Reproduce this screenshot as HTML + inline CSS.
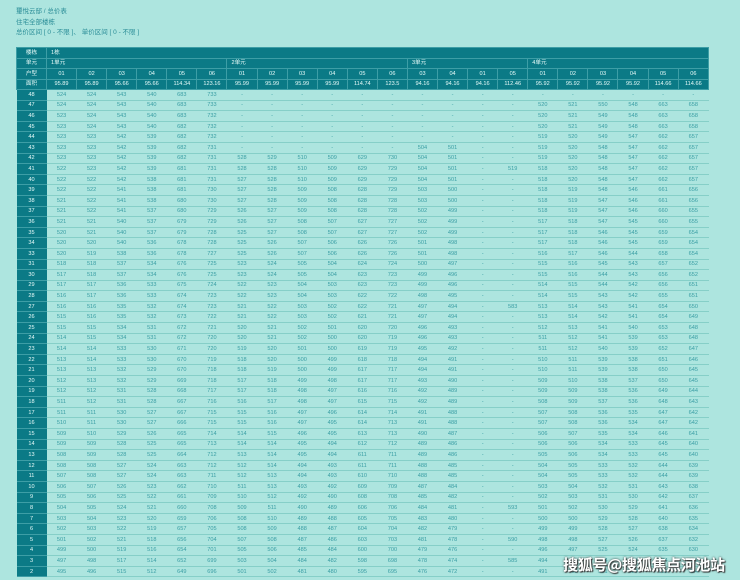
<!DOCTYPE html>
<html><head><meta charset="utf-8">
<style>
html,body{margin:0;padding:0;background:#ade5df;width:740px;height:580px;overflow:hidden;font-family:"Liberation Sans","Noto Sans CJK SC",sans-serif;}
.t{position:absolute;left:16px;font-size:6.5px;color:#2a8d97;line-height:8px;}
table{position:absolute;left:16px;top:47px;border-collapse:collapse;table-layout:fixed;width:692px;}
td{padding:0;font-size:5.6px;line-height:6px;text-align:center;white-space:nowrap;overflow:hidden;box-sizing:border-box;}
thead tr{height:10.5px;}
thead td{background:#0b7a86;color:#e8fbf9;border:1px solid #3d9ea6;}
thead td.l{text-align:left;padding-left:4px;}
tbody tr{height:10.6px;}
tbody td{color:#3a9ea4;border-bottom:1px solid #86cfc8;}
tbody td:first-child,thead td:first-child{background:#0b7a86;color:#e8fbf9;border-bottom:1px solid #3d9ea6;}
.wm{position:absolute;left:563px;top:554px;font-size:15px;font-weight:bold;color:#fff;text-shadow:0 0 2px #333,1px 1px 1px #333;font-family:"Noto Sans CJK SC",sans-serif;letter-spacing:-0.3px;}
</style></head><body>
<div class="t" style="top:8px">璽悅云邸 / 总价表</div>
<div class="t" style="top:19px">住宅全部楼栋</div>
<div class="t" style="top:29px">总价区间 [ 0 - 不限 ]、 单价区间 [ 0 - 不限 ]</div>
<table>
<colgroup><col style="width:30px"><col span="22" style="width:30.09px"></colgroup>
<thead>
<tr><td>楼栋</td><td class="l" colspan="22">1栋</td></tr>
<tr><td>单元</td><td class="l" colspan="6">1单元</td><td class="l" colspan="6">2单元</td><td class="l" colspan="4">3单元</td><td class="l" colspan="6">4单元</td></tr>
<tr><td>户型</td><td>01</td><td>02</td><td>03</td><td>04</td><td>05</td><td>06</td><td>01</td><td>02</td><td>03</td><td>04</td><td>05</td><td>06</td><td>03</td><td>04</td><td>01</td><td>05</td><td>01</td><td>02</td><td>03</td><td>04</td><td>05</td><td>06</td></tr>
<tr><td>面积</td><td>95.89</td><td>95.89</td><td>95.66</td><td>95.66</td><td>114.34</td><td>123.16</td><td>95.99</td><td>95.99</td><td>95.99</td><td>95.99</td><td>114.74</td><td>123.5</td><td>94.16</td><td>94.16</td><td>94.16</td><td>112.46</td><td>95.92</td><td>95.92</td><td>95.92</td><td>95.92</td><td>114.66</td><td>114.66</td></tr>
</thead>
<tbody>
<tr><td>48</td><td>524</td><td>524</td><td>543</td><td>540</td><td>683</td><td>733</td><td>-</td><td>-</td><td>-</td><td>-</td><td>-</td><td>-</td><td>-</td><td>-</td><td>-</td><td>-</td><td>-</td><td>-</td><td>-</td><td>-</td><td>-</td><td>-</td></tr>
<tr><td>47</td><td>524</td><td>524</td><td>543</td><td>540</td><td>683</td><td>733</td><td>-</td><td>-</td><td>-</td><td>-</td><td>-</td><td>-</td><td>-</td><td>-</td><td>-</td><td>-</td><td>520</td><td>521</td><td>550</td><td>548</td><td>663</td><td>658</td></tr>
<tr><td>46</td><td>523</td><td>524</td><td>543</td><td>540</td><td>683</td><td>732</td><td>-</td><td>-</td><td>-</td><td>-</td><td>-</td><td>-</td><td>-</td><td>-</td><td>-</td><td>-</td><td>520</td><td>521</td><td>549</td><td>548</td><td>663</td><td>658</td></tr>
<tr><td>45</td><td>523</td><td>524</td><td>543</td><td>540</td><td>682</td><td>732</td><td>-</td><td>-</td><td>-</td><td>-</td><td>-</td><td>-</td><td>-</td><td>-</td><td>-</td><td>-</td><td>520</td><td>521</td><td>549</td><td>548</td><td>663</td><td>658</td></tr>
<tr><td>44</td><td>523</td><td>523</td><td>542</td><td>539</td><td>682</td><td>732</td><td>-</td><td>-</td><td>-</td><td>-</td><td>-</td><td>-</td><td>-</td><td>-</td><td>-</td><td>-</td><td>519</td><td>520</td><td>549</td><td>547</td><td>662</td><td>657</td></tr>
<tr><td>43</td><td>523</td><td>523</td><td>542</td><td>539</td><td>682</td><td>731</td><td>-</td><td>-</td><td>-</td><td>-</td><td>-</td><td>-</td><td>504</td><td>501</td><td>-</td><td>-</td><td>519</td><td>520</td><td>548</td><td>547</td><td>662</td><td>657</td></tr>
<tr><td>42</td><td>523</td><td>523</td><td>542</td><td>539</td><td>682</td><td>731</td><td>528</td><td>529</td><td>510</td><td>509</td><td>629</td><td>730</td><td>504</td><td>501</td><td>-</td><td>-</td><td>519</td><td>520</td><td>548</td><td>547</td><td>662</td><td>657</td></tr>
<tr><td>41</td><td>522</td><td>523</td><td>542</td><td>539</td><td>681</td><td>731</td><td>528</td><td>528</td><td>510</td><td>509</td><td>629</td><td>729</td><td>504</td><td>501</td><td>-</td><td>519</td><td>518</td><td>520</td><td>548</td><td>547</td><td>662</td><td>657</td></tr>
<tr><td>40</td><td>522</td><td>522</td><td>542</td><td>538</td><td>681</td><td>731</td><td>527</td><td>528</td><td>510</td><td>509</td><td>629</td><td>729</td><td>504</td><td>501</td><td>-</td><td>-</td><td>518</td><td>520</td><td>548</td><td>547</td><td>662</td><td>657</td></tr>
<tr><td>39</td><td>522</td><td>522</td><td>541</td><td>538</td><td>681</td><td>730</td><td>527</td><td>528</td><td>509</td><td>508</td><td>628</td><td>729</td><td>503</td><td>500</td><td>-</td><td>-</td><td>518</td><td>519</td><td>548</td><td>546</td><td>661</td><td>656</td></tr>
<tr><td>38</td><td>521</td><td>522</td><td>541</td><td>538</td><td>680</td><td>730</td><td>527</td><td>528</td><td>509</td><td>508</td><td>628</td><td>728</td><td>503</td><td>500</td><td>-</td><td>-</td><td>518</td><td>519</td><td>547</td><td>546</td><td>661</td><td>656</td></tr>
<tr><td>37</td><td>521</td><td>522</td><td>541</td><td>537</td><td>680</td><td>729</td><td>526</td><td>527</td><td>509</td><td>508</td><td>628</td><td>728</td><td>502</td><td>499</td><td>-</td><td>-</td><td>518</td><td>519</td><td>547</td><td>546</td><td>660</td><td>655</td></tr>
<tr><td>36</td><td>521</td><td>521</td><td>540</td><td>537</td><td>679</td><td>729</td><td>526</td><td>527</td><td>508</td><td>507</td><td>627</td><td>727</td><td>502</td><td>499</td><td>-</td><td>-</td><td>517</td><td>518</td><td>547</td><td>545</td><td>660</td><td>655</td></tr>
<tr><td>35</td><td>520</td><td>521</td><td>540</td><td>537</td><td>679</td><td>728</td><td>525</td><td>527</td><td>508</td><td>507</td><td>627</td><td>727</td><td>502</td><td>499</td><td>-</td><td>-</td><td>517</td><td>518</td><td>546</td><td>545</td><td>659</td><td>654</td></tr>
<tr><td>34</td><td>520</td><td>520</td><td>540</td><td>536</td><td>678</td><td>728</td><td>525</td><td>526</td><td>507</td><td>506</td><td>626</td><td>726</td><td>501</td><td>498</td><td>-</td><td>-</td><td>517</td><td>518</td><td>546</td><td>545</td><td>659</td><td>654</td></tr>
<tr><td>33</td><td>520</td><td>519</td><td>538</td><td>536</td><td>678</td><td>727</td><td>525</td><td>526</td><td>507</td><td>506</td><td>626</td><td>726</td><td>501</td><td>498</td><td>-</td><td>-</td><td>516</td><td>517</td><td>546</td><td>544</td><td>658</td><td>654</td></tr>
<tr><td>31</td><td>518</td><td>518</td><td>537</td><td>534</td><td>676</td><td>725</td><td>523</td><td>524</td><td>505</td><td>504</td><td>624</td><td>724</td><td>500</td><td>497</td><td>-</td><td>-</td><td>515</td><td>516</td><td>545</td><td>543</td><td>657</td><td>652</td></tr>
<tr><td>30</td><td>517</td><td>518</td><td>537</td><td>534</td><td>676</td><td>725</td><td>523</td><td>524</td><td>505</td><td>504</td><td>623</td><td>723</td><td>499</td><td>496</td><td>-</td><td>-</td><td>515</td><td>516</td><td>544</td><td>543</td><td>656</td><td>652</td></tr>
<tr><td>29</td><td>517</td><td>517</td><td>536</td><td>533</td><td>675</td><td>724</td><td>522</td><td>523</td><td>504</td><td>503</td><td>623</td><td>723</td><td>499</td><td>496</td><td>-</td><td>-</td><td>514</td><td>515</td><td>544</td><td>542</td><td>656</td><td>651</td></tr>
<tr><td>28</td><td>516</td><td>517</td><td>536</td><td>533</td><td>674</td><td>723</td><td>522</td><td>523</td><td>504</td><td>503</td><td>622</td><td>722</td><td>498</td><td>495</td><td>-</td><td>-</td><td>514</td><td>515</td><td>543</td><td>542</td><td>655</td><td>651</td></tr>
<tr><td>27</td><td>516</td><td>516</td><td>535</td><td>532</td><td>674</td><td>723</td><td>521</td><td>522</td><td>503</td><td>502</td><td>622</td><td>721</td><td>497</td><td>494</td><td>-</td><td>583</td><td>513</td><td>514</td><td>543</td><td>541</td><td>654</td><td>650</td></tr>
<tr><td>26</td><td>515</td><td>516</td><td>535</td><td>532</td><td>673</td><td>722</td><td>521</td><td>522</td><td>503</td><td>502</td><td>621</td><td>721</td><td>497</td><td>494</td><td>-</td><td>-</td><td>513</td><td>514</td><td>542</td><td>541</td><td>654</td><td>649</td></tr>
<tr><td>25</td><td>515</td><td>515</td><td>534</td><td>531</td><td>672</td><td>721</td><td>520</td><td>521</td><td>502</td><td>501</td><td>620</td><td>720</td><td>496</td><td>493</td><td>-</td><td>-</td><td>512</td><td>513</td><td>541</td><td>540</td><td>653</td><td>648</td></tr>
<tr><td>24</td><td>514</td><td>515</td><td>534</td><td>531</td><td>672</td><td>720</td><td>520</td><td>521</td><td>502</td><td>500</td><td>620</td><td>719</td><td>496</td><td>493</td><td>-</td><td>-</td><td>511</td><td>512</td><td>541</td><td>539</td><td>653</td><td>648</td></tr>
<tr><td>23</td><td>514</td><td>514</td><td>533</td><td>530</td><td>671</td><td>720</td><td>519</td><td>520</td><td>501</td><td>500</td><td>619</td><td>719</td><td>495</td><td>492</td><td>-</td><td>-</td><td>511</td><td>512</td><td>540</td><td>539</td><td>652</td><td>647</td></tr>
<tr><td>22</td><td>513</td><td>514</td><td>533</td><td>530</td><td>670</td><td>719</td><td>518</td><td>520</td><td>500</td><td>499</td><td>618</td><td>718</td><td>494</td><td>491</td><td>-</td><td>-</td><td>510</td><td>511</td><td>539</td><td>538</td><td>651</td><td>646</td></tr>
<tr><td>21</td><td>513</td><td>513</td><td>532</td><td>529</td><td>670</td><td>718</td><td>518</td><td>519</td><td>500</td><td>499</td><td>617</td><td>717</td><td>494</td><td>491</td><td>-</td><td>-</td><td>510</td><td>511</td><td>539</td><td>538</td><td>650</td><td>645</td></tr>
<tr><td>20</td><td>512</td><td>513</td><td>532</td><td>529</td><td>669</td><td>718</td><td>517</td><td>518</td><td>499</td><td>498</td><td>617</td><td>717</td><td>493</td><td>490</td><td>-</td><td>-</td><td>509</td><td>510</td><td>538</td><td>537</td><td>650</td><td>645</td></tr>
<tr><td>19</td><td>512</td><td>512</td><td>531</td><td>528</td><td>668</td><td>717</td><td>517</td><td>518</td><td>498</td><td>497</td><td>616</td><td>716</td><td>492</td><td>489</td><td>-</td><td>-</td><td>509</td><td>509</td><td>538</td><td>536</td><td>649</td><td>644</td></tr>
<tr><td>18</td><td>511</td><td>512</td><td>531</td><td>528</td><td>667</td><td>716</td><td>516</td><td>517</td><td>498</td><td>497</td><td>615</td><td>715</td><td>492</td><td>489</td><td>-</td><td>-</td><td>508</td><td>509</td><td>537</td><td>536</td><td>648</td><td>643</td></tr>
<tr><td>17</td><td>511</td><td>511</td><td>530</td><td>527</td><td>667</td><td>715</td><td>515</td><td>516</td><td>497</td><td>496</td><td>614</td><td>714</td><td>491</td><td>488</td><td>-</td><td>-</td><td>507</td><td>508</td><td>536</td><td>535</td><td>647</td><td>642</td></tr>
<tr><td>16</td><td>510</td><td>511</td><td>530</td><td>527</td><td>666</td><td>715</td><td>515</td><td>516</td><td>497</td><td>495</td><td>614</td><td>713</td><td>491</td><td>488</td><td>-</td><td>-</td><td>507</td><td>508</td><td>536</td><td>534</td><td>647</td><td>642</td></tr>
<tr><td>15</td><td>509</td><td>510</td><td>529</td><td>526</td><td>665</td><td>714</td><td>514</td><td>515</td><td>496</td><td>495</td><td>613</td><td>713</td><td>490</td><td>487</td><td>-</td><td>-</td><td>506</td><td>507</td><td>535</td><td>534</td><td>646</td><td>641</td></tr>
<tr><td>14</td><td>509</td><td>509</td><td>528</td><td>525</td><td>665</td><td>713</td><td>514</td><td>514</td><td>495</td><td>494</td><td>612</td><td>712</td><td>489</td><td>486</td><td>-</td><td>-</td><td>506</td><td>506</td><td>534</td><td>533</td><td>645</td><td>640</td></tr>
<tr><td>13</td><td>508</td><td>509</td><td>528</td><td>525</td><td>664</td><td>712</td><td>513</td><td>514</td><td>495</td><td>494</td><td>611</td><td>711</td><td>489</td><td>486</td><td>-</td><td>-</td><td>505</td><td>506</td><td>534</td><td>533</td><td>645</td><td>640</td></tr>
<tr><td>12</td><td>508</td><td>508</td><td>527</td><td>524</td><td>663</td><td>712</td><td>512</td><td>514</td><td>494</td><td>493</td><td>611</td><td>711</td><td>488</td><td>485</td><td>-</td><td>-</td><td>504</td><td>505</td><td>533</td><td>532</td><td>644</td><td>639</td></tr>
<tr><td>11</td><td>507</td><td>508</td><td>527</td><td>524</td><td>663</td><td>711</td><td>512</td><td>513</td><td>494</td><td>493</td><td>610</td><td>710</td><td>488</td><td>485</td><td>-</td><td>-</td><td>504</td><td>505</td><td>533</td><td>532</td><td>644</td><td>639</td></tr>
<tr><td>10</td><td>506</td><td>507</td><td>526</td><td>523</td><td>662</td><td>710</td><td>511</td><td>513</td><td>493</td><td>492</td><td>609</td><td>709</td><td>487</td><td>484</td><td>-</td><td>-</td><td>503</td><td>504</td><td>532</td><td>531</td><td>643</td><td>638</td></tr>
<tr><td>9</td><td>505</td><td>506</td><td>525</td><td>522</td><td>661</td><td>709</td><td>510</td><td>512</td><td>492</td><td>490</td><td>608</td><td>708</td><td>485</td><td>482</td><td>-</td><td>-</td><td>502</td><td>503</td><td>531</td><td>530</td><td>642</td><td>637</td></tr>
<tr><td>8</td><td>504</td><td>505</td><td>524</td><td>521</td><td>660</td><td>708</td><td>509</td><td>511</td><td>490</td><td>489</td><td>606</td><td>706</td><td>484</td><td>481</td><td>-</td><td>593</td><td>501</td><td>502</td><td>530</td><td>529</td><td>641</td><td>636</td></tr>
<tr><td>7</td><td>503</td><td>504</td><td>523</td><td>520</td><td>659</td><td>706</td><td>508</td><td>510</td><td>489</td><td>488</td><td>605</td><td>705</td><td>483</td><td>480</td><td>-</td><td>-</td><td>500</td><td>500</td><td>529</td><td>528</td><td>640</td><td>635</td></tr>
<tr><td>6</td><td>502</td><td>503</td><td>522</td><td>519</td><td>657</td><td>705</td><td>508</td><td>509</td><td>488</td><td>487</td><td>604</td><td>704</td><td>482</td><td>479</td><td>-</td><td>-</td><td>499</td><td>499</td><td>528</td><td>527</td><td>638</td><td>634</td></tr>
<tr><td>5</td><td>501</td><td>502</td><td>521</td><td>518</td><td>656</td><td>704</td><td>507</td><td>508</td><td>487</td><td>486</td><td>603</td><td>703</td><td>481</td><td>478</td><td>-</td><td>590</td><td>498</td><td>498</td><td>527</td><td>526</td><td>637</td><td>632</td></tr>
<tr><td>4</td><td>499</td><td>500</td><td>519</td><td>516</td><td>654</td><td>701</td><td>505</td><td>506</td><td>485</td><td>484</td><td>600</td><td>700</td><td>479</td><td>476</td><td>-</td><td>-</td><td>496</td><td>497</td><td>525</td><td>524</td><td>635</td><td>630</td></tr>
<tr><td>3</td><td>497</td><td>498</td><td>517</td><td>514</td><td>652</td><td>699</td><td>503</td><td>504</td><td>484</td><td>482</td><td>598</td><td>698</td><td>478</td><td>474</td><td>-</td><td>585</td><td>494</td><td>495</td><td>524</td><td>523</td><td>634</td><td>629</td></tr>
<tr><td>2</td><td>495</td><td>496</td><td>515</td><td>512</td><td>649</td><td>696</td><td>501</td><td>502</td><td>481</td><td>480</td><td>595</td><td>695</td><td>476</td><td>472</td><td>-</td><td>-</td><td>491</td><td>492</td><td>521</td><td>520</td><td>632</td><td>624</td></tr>
</tbody>
</table>
<div class="wm">搜狐号@搜狐焦点河池站</div>
</body></html>
